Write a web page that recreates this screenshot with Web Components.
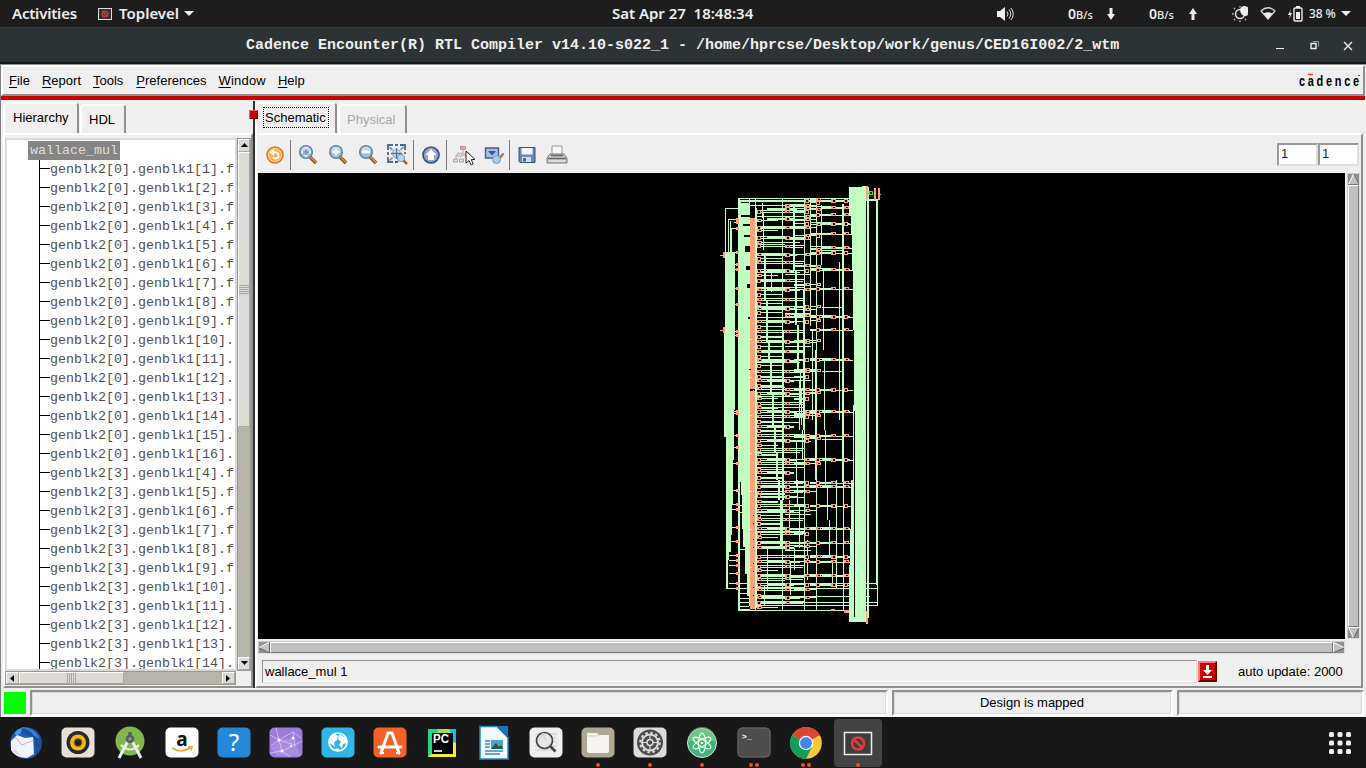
<!DOCTYPE html>
<html lang="en"><head><meta charset="utf-8"><title>Toplevel</title>
<style>
html,body{margin:0;width:1366px;height:768px;overflow:hidden;background:#181818}
body{font:13px "Liberation Sans",Arial,sans-serif;color:#000}
</style></head><body>
<desktop-shell></desktop-shell>
<script>
const define = (name, css, html, after) => customElements.define(name, class extends HTMLElement {
  connectedCallback() {
    if (this.shadowRoot) return;
    const root = this.attachShadow({mode:'open'});
    const t = document.createElement('template');
    t.innerHTML = '<style>*{box-sizing:border-box}:host{display:block;box-sizing:border-box}' + css + '</style>' + (typeof html === 'function' ? html(this) : html);
    root.append(t.content.cloneNode(true));
    if (after) after(this, root);
  }
});
const BLOCK = `<rect x=".5" y=".5" width="13" height="11" fill="#333" stroke="#ddd"/><circle cx="7" cy="6" r="3" fill="#733" stroke="#e33"/><path d="M5 4l4 4" stroke="#e33"/>`;

define('desktop-topbar', `
:host{height:27px;background:#1d1d1d;color:#eee;display:grid;grid-template-columns:1fr auto 1fr;align-items:center;font:600 15px/27px "Noto Sans","Open Sans",sans-serif}
div{display:flex;align-items:center;height:27px;white-space:nowrap}svg{display:block;flex:none}
.l{padding-left:12px}.l svg:first-of-type{margin:0 7px 0 21px}.l svg:last-of-type{margin-left:4px}
.r{justify-content:flex-end;padding-right:15px;font-size:14px}small{font-size:11px;font-weight:500}`,
`<div class="l"><span style="width:65px;letter-spacing:-.2px">Activities</span><svg width="14" height="12">${BLOCK}</svg><span style="width:61px">Toplevel</span><svg width="10" height="5"><path d="M0 0h10L5 5z" fill="#eee"/></svg></div>
<div style="width:142px;letter-spacing:-.02px;white-space:pre">Sat Apr 27  18:48:34</div>
<div class="r"><svg width="17" height="16" style="margin-right:2px"><path d="M0 5h3l5-4v14l-5-4H0z" fill="#eee"/><path d="M10 5.500q2.200 2.500 0 5M12 3.500q3.500 4.500 0 9M14 2q4.500 6 0 12" fill="none" stroke="#ddd"/></svg>
<span style="margin-left:52px;width:26px">0<small>B/s</small></span><svg style="margin-left:13px" width="8" height="12"><path d="M2.500 0h3v6H8l-4 6-4-6h2.500z" fill="#eee"/></svg>
<span style="margin-left:34px;width:26px">0<small>B/s</small></span><svg style="margin-left:14px" width="8" height="12"><path d="M2.500 12h3V6H8L4 0 0 6h2.500z" fill="#eee"/></svg>
<svg style="margin-left:35px" width="16" height="16"><circle cx="8" cy="8" r="4.500" fill="none" stroke="#ddd" stroke-width="1.500"/><path d="M8 3a5 5 0 1 1 5 7Q8 9 8 3z" fill="#eee"/><path d="M8 0v1.500M8 14.500V16M0 8h1.500M14.500 8H16M2 2l1 1M13 13l1 1M14 2l-1 1M3 13l-1 1" stroke="#ccc" stroke-width="1.300"/></svg>
<svg style="margin-left:12px" width="16" height="13"><path d="M1 4q7-6.500 14 0L8 12z" fill="none" stroke="#ddd" stroke-width="1.200"/><path d="M3.500 6.500q4.500-2.500 9 0L8 12z" fill="#eee"/></svg>
<svg style="margin-left:12px" width="15" height="16"><path d="M3 3L0 9h2l-1 4 3-6H2z" fill="#eee"/><rect x="6" y="2" width="8" height="13" rx="1" fill="none" stroke="#eee" stroke-width="1.400"/><path d="M8 0h4v2H8zM8 6h4v7H8z" fill="#eee"/></svg>
<span style="width:27px;margin-left:6px;font-size:12px;font-weight:500;letter-spacing:-.1px">38 %</span><svg style="margin-left:5px" width="10" height="5"><path d="M0 0h10L5 5z" fill="#eee"/></svg></div>`);

define('window-titlebar', `
:host{height:37px;background:linear-gradient(#3a3d3f 0 1px,#2d3335 1px 35px,#151819 35px 36px,#151819);display:grid;grid-template-columns:246px 873px 1fr;align-items:center;color:#eee}
b{grid-column:2;font:bold 15px/34px "Liberation Mono",monospace;white-space:nowrap}
svg{display:block;margin-left:157px}`,
`<b>Cadence Encounter(R) RTL Compiler v14.10-s022_1 - /home/hprcse/Desktop/work/genus/CED16I002/2_wtm</b>
<svg width="80" height="12" fill="none" stroke="#eee"><path d="M0 8.500h8"/><path d="M35 3.500h5v5h-5z" stroke-width="1.400"/><path d="M37 1.500h5.500v5" stroke="#999"/><path d="M68 2l8 8M76 2l-8 8" stroke-width="1.400"/></svg>`);

define('menu-bar', `
:host{height:31px;margin:0 1px 0 0;border:2px solid #fff;border-right-color:#909090;border-bottom-color:#909090;background:#efefef;display:flex;align-items:center;padding:0 3px 0 6px}
span{margin-right:12px;white-space:nowrap;line-height:18px}u{text-decoration-thickness:1px;text-underline-offset:2px}.c{display:flex;margin:0 0 0 auto;width:61px;height:20px;position:relative;font:bold 15px/19px "Liberation Sans",sans-serif;letter-spacing:3.700px}
.c b{transform:scaleX(.73);transform-origin:0 0}.c svg{position:absolute;left:0;top:0}`,
`<span>File</span><span>Report</span><span style="margin-right:13px">Tools</span><span>Preferences</span><span style="letter-spacing:.2px">Window</span><span>Help</span>
<div class="c"><b>cadence</b><svg width="61" height="20"><path d="M9 3.500h5" stroke="#e33" stroke-width="1.600"/><path d="M59 4.500h2" stroke="#555"/></svg></div>`,
(h, r) => r.querySelectorAll('span').forEach(s => { const t = s.textContent; s.innerHTML = `<u>${t[0]}</u>${t.slice(1)}`; }));

define('note-tab', `
:host{border:2px solid #fff;border-right-color:#909090;border-bottom:0;border-radius:5px 4px 0 0;height:31px;width:var(--w);margin-top:2px;background:#efefef;padding-left:var(--p,8px);line-height:27px;white-space:nowrap;align-self:flex-start}
:host([back]){margin:4px 0 0 1px;height:29px;padding-left:7px}
:host([off]){color:#a8a8a8}
:host([focused]) span{display:block;outline:1px dotted #000;width:64px;height:19px;line-height:19px;margin-top:4px;padding-left:1px}`, `<span><slot></slot></span>`);

define('note-book', `
:host{display:flex;flex-direction:column;min-width:0}
.tabs{height:33px;display:flex;flex:none}
.page{flex:1;min-height:0;border:2px solid;border-color:#fff #909090 #909090 #fff;background:#efefef}`,
`<div class="tabs"><slot name="tab"></slot></div><div class="page"><slot></slot></div>`);

define('tree-list', `
:host{width:232px;height:533px;border:2px solid #d9d9d9;background:#fff;overflow:hidden;font:13.333px/19px "Liberation Mono",monospace;color:#505050;padding:1px 0 0 21px}
.root{width:92px;height:19px;background:#858585;color:#ddd;padding-left:2px}
.rows{margin-left:11px;border-left:1px solid #000;white-space:nowrap}
.rows div{height:19px;display:flex}.rows div:before{content:"";width:10px;height:1px;background:#000;margin-top:8px;flex:none}`,
`<div class="root">wallace_mul</div><div class="rows"></div>`, (h, r) => {
  const rows = [];
  for (let i = 1; i < 17; i++) rows.push([0, i]);
  for (let i = 4; i < 15; i++) rows.push([3, i]);
  r.querySelector('.rows').innerHTML = rows.map(([a, b]) => `<div>genblk2[${a}].genblk1[${b}].${b < 10 ? 'f' : ''}</div>`).join('');
});

define('warm-scroll', `
:host{background:#b8b4aa;display:flex;border:1px solid #9c988e}
:host([v]){width:14px;flex-direction:column}:host([h]){height:14px}
i{display:grid;place-items:center;background:#dcdad5;flex:none;border:1px solid;border-color:#fff #aaa69c #aaa69c #fff}
:host([v]) i{height:13px}:host([h]) i{width:13px}
:host([v]) i.t{height:275px}:host([h]) i.t{width:105px}
i:last-child{margin:auto 0 0}:host([h]) i:last-child{margin:0 0 0 auto}`,
h => { const v = h.hasAttribute('v');
  const a = v ? ['M0 5h7L3.500 1z','M0 1h7L3.500 5z'] : ['M5 0v7L1 3.500z','M1 0v7l4-3.500z'];
  const s = d => `<svg width="7" height="7"><path d="${d}"/></svg>`;
  return `<i>${s(a[0])}</i><i class="t"><svg width="11" height="11" stroke="#aaa69c">${[1,3,5,7,9].map(n => v ? `<path d="M0 ${n}.5h11"/>` : `<path d="M${n}.5 0v11"/>`).join('')}</svg></i><i>${s(a[1])}</i>`; });

define('tk-scroll', `
:host{background:#aaa;border:1px solid;border-color:#c8c8c8 #ddd #ddd #c8c8c8;display:flex}
:host([v]){flex-direction:column}svg{flex:none;display:block;background:#909090}
i{flex:1;background:#c0c0c0;border:1px solid;border-color:#fff #777 #777 #fff}`,
h => h.hasAttribute('v')
 ? `<svg width="11" height="11"><path d="M5.500 0L0 11h11z" fill="#c0c0c0"/><path d="M5.500 0L.5 10.500" stroke="#fff"/><path d="M6 0l5 10.500H0" fill="none" stroke="#777"/></svg><i></i><svg width="11" height="11"><path d="M0 0h11L5.500 11z" fill="#c0c0c0"/><path d="M11 .5H.5L5.500 11" fill="none" stroke="#fff"/><path d="M11 1L5.500 11" stroke="#666"/></svg>`
 : `<svg width="11" height="11"><path d="M0 5.500L11 0v11z" fill="#c0c0c0"/><path d="M11 0L0 5.500" stroke="#fff"/><path d="M0 6l10.500 5V0" fill="none" stroke="#666"/></svg><i></i><svg width="11" height="11"><path d="M0 0v11l11-5.500z" fill="#c0c0c0"/><path d="M.5 11V.5L11 5.500" fill="none" stroke="#fff"/><path d="M0 11l11-5" stroke="#666"/></svg>`);

define('tool-bar', `
:host{height:38px;display:flex;align-items:center;padding:1px 2px 0 6px}
svg{width:24px;height:24px;flex:none;display:block;margin:1px 6px 0 0;overflow:visible}
i{width:1px;height:30px;background:#777;flex:none;margin:0 5px 0 -3px}
.f{width:41px;height:23px;border:2px solid;border-color:#999 #ddd #ddd #999;background:#fff;line-height:18px;padding-left:2px;margin-left:auto;color:#222}.f+.f{margin-left:0}`,
() => { const mag = inner => `<svg viewBox="0 0 24 24"><path d="M14 14l6 6" stroke="#7a4210" stroke-width="3.400"/><path d="M14 13.500l6 6" stroke="#d98a38" stroke-width="1.800"/><circle cx="10" cy="9" r="6.300" fill="#9fbcd9" stroke="#5d7fa8" stroke-width="1.500"/><ellipse cx="10" cy="7" rx="4.500" ry="3.500" fill="#dce9f4" opacity=".6"/>${inner}</svg>`;
return `<svg viewBox="0 0 24 24"><circle cx="12" cy="12" r="8" fill="#f6ae4c" stroke="#d97a26" stroke-width="1.500"/><circle cx="12" cy="12" r="6.500" fill="none" stroke="#ffd698"/><path d="M9.500 9.500h3.500a3 3 0 1 1-3 4.500" fill="none" stroke="#fff" stroke-width="2"/><path d="M11 6v7L6.500 9.500z" fill="#fff"/></svg><i></i>
${mag('<g fill="#f4f8fc"><path d="M10 3.500l2 2.500H8zM10 14.500l2-2.500H8zM4.500 9L7 7v4zM15.500 9L13 7v4z"/></g><path d="M10 6v6M7 9h6" stroke="#6f93bb" stroke-width="1.500"/>')}
${mag('<path d="M10 5.500v7M6.500 9h7" stroke="#fff" stroke-width="2.400"/>')}
${mag('<path d="M6 9h8" stroke="#fff" stroke-width="2.600"/>')}
<svg viewBox="0 0 24 24"><g transform="translate(-2 -1)"><path d="M4 8V3h5M16 3h5v5M9 20H4v-5M11 3h3M4 10v3M11 20h3M21 10v2" fill="none" stroke="#476b91" stroke-width="1.800"/><path d="M5.500 5l3 3M19.500 5l-3 3M5.500 18.500l3-3" stroke="#6f8fb0" stroke-width="1.500"/><path d="M12.500 6v11M7 11.500h11" stroke="#476b91" stroke-width="1.300"/><circle cx="12.500" cy="11.500" r="4" fill="none" stroke="#7796b5"/><path d="M19 18l4 4" stroke="#a86427" stroke-width="2.500"/><circle cx="17" cy="16" r="3.700" fill="#b7d5ee" stroke="#7298be"/></g></svg><i></i>
<svg viewBox="0 0 24 24"><circle cx="12" cy="12" r="8" fill="#92a8cb" stroke="#344f83" stroke-width="1.700"/><path d="M12 6l5.500 6H15v5H9v-5H6.500z" fill="#fff"/></svg><i></i>
<svg viewBox="0 0 24 24"><g transform="translate(-1 0)"><path d="M12 6v6M5 16v-4h13v4" fill="none" stroke="#aaa"/><path d="M9.500 3.500h5v3h-5z" fill="#e9a8a2" stroke="#d08a84"/><path d="M6.500 10h4v3.500h-4zM14 10h4v3.500h-4z" fill="#eed0b0" stroke="#deb490"/><path d="M2.500 16h4v3h-4zM8.500 16h4v3h-4z" fill="#dbe4ed" stroke="#93a9be"/><path d="M15 8v12l3-2.500 2.200 4.500 2-1-2-4.500H24z" fill="#fff" stroke="#222"/></g></svg>
<svg viewBox="0 0 24 24"><path d="M3.500 5h13v10h-13z" fill="#a9bee2" stroke="#405f9e" stroke-width="1.500"/><path d="M6 8h8l-4 4.500z" fill="#35588d"/><path d="M17 16l4.500-5.500" stroke="#b57739" stroke-width="2.500"/><circle cx="14.500" cy="16.500" r="4" fill="#a9cbe8" stroke="#7697b8"/></svg><i></i>
<svg viewBox="0 0 24 24"><path d="M4 4.500h16v15H5l-1-1z" fill="#6689c4" stroke="#39507e"/><path d="M6.500 5h11v6.500h-11z" fill="#f4f6fa"/><path d="M7 14h9v5H7z" fill="#ddd"/><path d="M8 15h3v3.500H8z" fill="#506995"/></svg>
<svg viewBox="0 0 24 24"><path d="M7 12V3h10v9z" fill="#f6f6f6" stroke="#999"/><path d="M5 11h14l3 4v5H2v-5z" fill="#ccc" stroke="#777"/><path d="M3 15.500h18M6 12.500h12" stroke="#666" stroke-width="1.300"/><path d="M4 18h16" stroke="#eee"/></svg>
<div class="f">1</div><div class="f">1</div>`; });

define('schematic-view', `:host{background:#000;width:1087px;height:466px}svg{display:block;shape-rendering:crispEdges}`,
'<svg width="1087" height="466" viewBox="258 173 1087 466"></svg>', (h, root) => {
  const G = '#c0ffc0', S = '#ffa07a'; let out = '';
  const box = (x, y, w, ht, f = G) => { out += `<rect x="${x}" y="${y}" width="${w}" height="${ht}" fill="${f}"/>`; };
  const H = (x1, x2, y, t = 1) => box(x1, y, x2 - x1, t), V = (x, y1, y2, t = 1) => box(x, y1, t, y2 - y1);
  const join = (a, b, c) => [...a.map(v => 180 + Math.floor(v / 3)), ...b.map(v => 330 + Math.floor(v / 3)), ...c.map(v => 480 + Math.floor(v / 3))];
  const A = join([95,120,141,151,172,187,195,222,235,247,271,286,301,328,343,357,369,384,397,424,439],[3,18,34,49,64,78,91,106,124,138,151,166,174,190,205,219,232,244,260,274,289,302,316,331,346,359,374,388,401,417,427,441],[6,19,38,46,64,77,91,106,117,130,145,159,173,187,202,230,245,258,270,285,298,313,328,346,352,368,382]);
  const B = join([77,85,95,115,141,172,198,222,247,271,301,328,357,384,407,424],[3,34,64,91,124,151,178,190,219,244,260,289,316,331,359,388,401,427],[6,19,34,48,77,91,117,145,159,187,194,202,230,245,258,285,294,313,328,352,368]);
  const C = join([62,76,86,95,108,118,130,141,166,173,222,256,271,313,328,380,387,407,424],[30,36,87,118,124,138,178,190,205,244,250,260,316,323,331,388,401],[6,19,34,77,92,145,159,187,198,230,245,285,313,328,352]);
  const D = join([57,67,87,103,133,166,208,217,260,268,314,324,379,409,421,448],[30,87,120,178,187,244,256,316,324,388,401],[6,19,77,145,187,230,245,285,313]);
  const E = join([61,82,103,129,160,203,217,268,324,409,448],[87,178,244,316,388],[6,19,77,145,187,230,245,285,313]);
  const L = join([118,126,144,217,252,268,325,372],[3,16,244,251,317,352,400],[31,73,88,142,184,226,241,256,280,310,325]);
  // rails that close the drawing at its top and bottom
  H(738,849,198); H(738,849,200,2); H(741,793,205); H(767,815,208); H(725,739,208); H(728,737,219); H(731,737,228);
  V(725,208,252); V(728,219,252); V(730,221,252); V(731,228,252);
  H(738,849,610); H(739,878,605); H(740,877,602); H(740,870,596); H(739,877,588); H(757,877,583); H(726,738,588);
  // staircase channel: x, first y and last y of each step
  const steps = [[764,255,300],[766,300,342],[768,342,362],[770,362,394],[772,394,426],[774,426,452],[776,452,480],[778,480,500],[780,500,548]];
  const hasB = y => B.some(b => Math.abs(b - y) < 2);
  A.forEach((y, i) => { H(757, hasB(y) ? 785 : 782 - i % 2 * 4, hasB(y) ? y - 1 : y, i % 5 == 2 ? 2 : 1); if (hasB(y)) H(757, 785, y + 1); });
  for (let y = 216, i = 0; y < 600; y += 11 + i++ % 3 * 4) H(757, 800 + i % 2 * 5, y);
  B.forEach((y, i) => { if (i % 2) { H(767, 785, y, 2); H(790, 794 + i % 3 * 3, y, 2); } else { H(790, 805, y - 1); H(790, 803, y + 1); } });
  C.forEach((y, i) => { H(794, 805, y, i % 2 + 1); if (i % 3) H(810, 817, y); if (i % 4 == 0) H(785, 811, y + 4); });
  D.forEach((y, i) => { H(810, 817, y); if (i % 3 == 0) H(822, 842, y + 1); });
  E.forEach((y, i) => { H(810, 832, y - i % 2); H(810, 853, y + 1); if (i % 2) H(822, 850, y); });
  // vertical channels
  V(782,198,610); V(783,330,500); V(755,198,610); V(756,208,608); V(762,203,218); V(793,205,270,2); V(795,270,325,2); V(797,325,372,2);
  V(800,372,405); V(804,198,610); V(803,290,430); V(810,202,300); V(810,300,326); V(812,330,420); V(816,198,610); V(815,350,480);
  V(821,205,265); V(823,270,350); V(824,360,430); V(825,430,485); V(827,485,520); V(829,520,555); V(832,560,583);
  V(839,262,420); V(842,204,482,2); V(836,480,588); V(843,482,610); V(853,405,480);
  [...steps,[799,380,430],[801,390,425],[802,430,459],[797,480,505],[799,505,548],[794,548,570]].forEach(a => V(...a, a[0] < 782 ? 2 : 1));
  [[763,228,250],[771,270,292],[789,500,535],[767,548,590],[790,562,595],[807,540,580],[764,585,605],[763,212,236],[796,440,486]].forEach(a => V(...a));
  // left bus, cell spine and right bus
  box(738,198,12,412); box(740,199,9,1,'#000'); box(741,202,8,1,'#000'); box(741,215,9,2,'#000');
  [[743,224],[744,235],[745,246],[745,248],[745,250],[746,266],[746,268],[747,284],[747,286],[748,317]].forEach(([x,y]) => box(x,y,750-x,2,'#000'));
  out += `<path fill="${G}" d="M725 252H735V410H734V460H733V505H732V535H731V552H729V560H728V588H726V437H724V333H725z"/>`;
  out += '<path fill="#000" d="M740 482h1v13h1v34h1v18h2v27h2v22h2v10h1v3h-10z"/>';
  [505,512,549,583,588,593,598,602,606].forEach(y => H(739,749,y));
  box(750,218,5,391,S); box(750,389,5,2,'#000'); box(749,369,2,1,'#000');
  for (let y = 222, i = 0; y < 606; y += 5 + i++ % 3 * 3) box(753, y, 1, 1, y > 500 && i % 3 ? '#000' : G);
  for (let y = 339; y < 600; y += 38) box(750, y, 2, 1, G);
  out += `<path fill="${G}" d="M849 187H862V186H866V611H864V611H866V622H849V565H850V530H851V480H854V330H853V270H852V235H851V215H849z"/>`;
  box(854,411,1,206,'#000'); V(867,187,618,2); V(876,200,585,2); V(877,583,606); H(866,878,199,2);
  box(866,186,2,13,S); box(874,188,2,12,S); box(878,188,2,12,S); box(880,194,1,1,S); box(866,611,1,13,S); box(867,618,1,6,S);
  out += '<path d="M868 193h2v1h-2zM869 191h4v4h-4z" fill="#0f0"/><path d="M870 192h2v2h-2z"/>';
  // cells, each with its dark window
  const cell = (x, y, big) => { box(x, y - 1, big == 1 ? 4 : 5, big ? 4 : 3, S); box(x + (big == 1 ? 1 : 2), y, 2, big ? 2 : 1, '#000'); };
  A.forEach((y, i) => cell(757, y, i % 2 == 0 ? 1 : 0)); B.forEach((y, i) => cell(785, y, i % 2 ? 2 : 0));
  C.forEach((y, i) => cell(805, y, i % 3 == 0 ? 1 : 0)); D.forEach((y, i) => cell(816, y, i % 2));
  E.forEach((y, i) => { cell(831, y, i % 3 == 0 ? 2 : 0); cell(844, y, i % 3 == 0 ? 1 : 0); });
  box(831,609,4,2,S); box(844,610,5,3,S);
  L.forEach(y => { H(y > 430 ? 729 : 734, 737, y); box(736, y - 1, 3, 3, S); });
  [[722,255],[722,330]].forEach(([x,y]) => { box(x-2,y,4,1,S); box(723,y-3,2,6,S); });
  root.querySelector('svg').innerHTML = out;
});

define('status-bar', `
:host{height:27px;display:grid;grid-template-columns:22px 858px 281px 187px;column-gap:4px;padding-left:3px;margin-top:2px;background:#f3f3f3}
.g{background:#0f0;margin:2px 0 3px;height:22px}.s{border:2px solid;border-color:#909090 #fff #fff #909090;height:26px;margin-left:1px}.s div{height:22px;border:1px solid #d9d9d9;text-align:center;line-height:20px;background:#efefef;padding-right:1px}.s:nth-child(n+3){margin-left:0}`,
`<div class="g"></div><div class="s"><div></div></div><div class="s"><div>Design is mapped</div></div><div class="s"><div></div></div>`);

const tile = (fill, inner) => `<rect x=".5" y="1.500" width="33" height="30" rx="5" fill="${fill}"/>${inner}`;
const ICONS = {
 mail:`<circle cx="17" cy="17" r="15.800" fill="#1c5fb4"/><path d="M3 11Q8 1 17 1q12 1 15 12 1 12-6 17 3-12-4-19T3 11z" fill="#1d4f9c"/><path d="M14 1q12 1 17 12l-6-3Q21 3 12 2z" fill="#2b86d9"/><path d="M2 15l6-6 8 3 8-1 1 17-7 4Q5 31 2 24z" fill="#f3f4f8"/><path d="M6 11l7 8 12-5" fill="none" stroke="#b4b8c6"/><path d="M3 23q6 1 9 7-6-2-9-7z" fill="#d8dcea"/><path d="M6 7q2-4 7-5l-1 5-5 3z" fill="#3aa0e8"/>`,
 rhythm:tile('#e5dfd5','<circle cx="17" cy="16.500" r="11.500" fill="#28292c"/><circle cx="17" cy="16.500" r="8" fill="#f5b912"/><circle cx="17" cy="16.500" r="4" fill="#222" stroke="#987700"/>'),
 android:`<circle cx="17" cy="15" r="14.500" fill="#82b84b"/><path d="M6 32L16 13M28 32L18 13" fill="none" stroke="#eee" stroke-width="3"/><path d="M8 19q9 9 18 0" fill="none" stroke="#e8f0e0" stroke-width="2"/><path d="M17 6v5" stroke="#55606a" stroke-width="3.500"/><circle cx="17" cy="13" r="3" fill="#83a766" stroke="#55606a" stroke-width="2.600"/>`,
 amazon:tile('#fff','<text x="17" y="20" text-anchor="middle" style="font:bold 19px \'Noto Sans\',sans-serif" fill="#111">a</text><path d="M7 22q9 5.500 18 0M23 21h4l-1 3" fill="none" stroke="#f39a2b" stroke-width="1.600"/>'),
 help:tile('#2387da','<text x="17" y="25" text-anchor="middle" style="font:24px \'Noto Sans\',sans-serif" fill="#fff">?</text>'),
 graph:tile('#9b7cdb','<path d="M2 22l9-8 12-2 9 18H8z" fill="#b49be8" opacity=".6"/><path d="M1 9l9 5 14-8 8 6M10 14l16 5 7-4M10 14l3 11 13-6-2-13M1 27l12-2 8 6M2 20l8-6L7 2" fill="none" stroke="#d5c4fa" stroke-width=".8"/><g fill="#fff"><circle cx="10" cy="14" r="1.500"/><circle cx="24" cy="12" r="1.500"/><circle cx="13" cy="25" r="1.500"/><circle cx="22" cy="20" r="1"/></g>'),
 globe:tile('#30b6e6','<circle cx="17" cy="16" r="9" fill="none" stroke="#fff" stroke-width="1.700"/><path d="M9 12l5-4 3 2-1 4-3 2 1 5-5-4zM18 8l7 4 1 5-4 1-1 4-3-3 2-3-3-3zM14 22l5 1-3 2z" fill="#fff"/>'),
 software:tile('#f46229','<path d="M8 27L15 7h4l7 20M6 21h22" fill="none" stroke="#fff" stroke-width="3" stroke-linejoin="round" stroke-linecap="round"/><path d="M8 27h3M23 27h4" stroke="#fff" stroke-width="2"/>'),
 pycharm:`<path d="M3 3h28v28H3z" fill="#21d789"/><path d="M24 3h7v13l-4-2z" fill="#18bbdf"/><path d="M13 3h11l3 6H11z" fill="#9fe04c"/><path d="M31 17v14H3l6-6 18-9z" fill="#f5ee38"/><path d="M3 31l7-7H3z" fill="#35d680"/><rect x="7" y="7" width="21" height="21" fill="#000"/><text x="8" y="17" textLength="16" lengthAdjust="spacingAndGlyphs" style="font:bold 12px 'Liberation Sans',sans-serif" fill="#fff">PC</text><path d="M9 25h8" stroke="#fff" stroke-width="1.600"/>`,
 writer:`<path d="M3 .5h17l11 11V33H3z" fill="#f5f9fc" stroke="#2386ca" stroke-width="1.500"/><path d="M20 0h11v12z" fill="#1774b8"/><path d="M8 15h5M8 18h5M8 21h5M8 25h18M8 28h15" stroke="#3a8ac5" stroke-width="1.300"/><path d="M14 14h12v9H14z" fill="#4ba3d0"/><path d="M14 23l5-6 3 4 2-2 2 4z" fill="#2b5244"/>`,
 viewer:tile('#efefed','<path d="M6 8h22M6 12h22M6 16h22M6 20h22M6 24h22" stroke="#ccc"/><circle cx="15.500" cy="14.500" r="8" fill="#e7e7e5" stroke="#444" stroke-width="1.700"/><path d="M21.500 20.500l5 5" stroke="#444" stroke-width="2.600"/><path d="M10 15l4-8 3 8" fill="none" stroke="#ccc"/>'),
 files:tile('#aea794','<path d="M6 7h10l2 2h10v16q0 2-2 2H8q-2 0-2-2z" fill="#f6f4f0"/><path d="M6 10h10l2-1" fill="none" stroke="#d5d0c5" stroke-width="1.200"/>'),
 settings:tile('#dcdcdb','<circle cx="17" cy="16.500" r="13" fill="#4c4c4c"/><circle cx="17" cy="16.500" r="8" fill="none" stroke="#ddd" stroke-width="2"/><circle cx="17" cy="16.500" r="9.800" fill="none" stroke="#ddd" stroke-width="2" stroke-dasharray="2.600 2.530"/><circle cx="17" cy="16.500" r="3" fill="none" stroke="#ddd" stroke-width="1.500"/><path d="M17 8v5.500M17 19.500v5M9 16.500h5M20 16.500h5" stroke="#ddd" stroke-width="1.200"/>'),
 atom:`<circle cx="17" cy="17" r="14.500" fill="#3eb57e" stroke="#dce9df"/><path d="M3 15a14 14 0 0 1 28 0z" fill="#8dcf8e" opacity=".6"/><g fill="none" stroke="#eaffea" stroke-width="1.200"><ellipse cx="17" cy="17" rx="3.500" ry="10"/><ellipse cx="17" cy="17" rx="3.500" ry="10" transform="rotate(60 17 17)"/><ellipse cx="17" cy="17" rx="3.500" ry="10" transform="rotate(-60 17 17)"/></g><circle cx="17" cy="17" r="1.300" fill="#fff"/>`,
 terminal:tile('#4d4d4d','<text x="5" y="13" textLength="10" style="font:bold 8px \'Liberation Mono\',monospace" fill="#fff">&gt;_</text><rect x="1" y="2" width="32" height="29" rx="4" fill="none" stroke="#666"/>'),
 chrome:`<circle cx="17" cy="17" r="15.800" fill="#fbc934"/><path d="M17 17L3.300 9A15.800 15.800 0 0 1 30.700 9z" fill="#db4437"/><path d="M17 9h13.500" stroke="#db4437" stroke-width="2"/><path d="M3.300 9A15.800 15.800 0 0 0 17 33l6-12-6-4z" fill="#199b58"/><circle cx="17" cy="17" r="7.200" fill="#fff"/><circle cx="17" cy="17" r="6" fill="#4285f4"/>`,
 blocked:`<rect x="3.500" y="6.500" width="27" height="22" fill="#3d3d3d" stroke="#eee" stroke-width="1.500"/><circle cx="17" cy="17.500" r="6" fill="none" stroke="#df3d3c" stroke-width="2.500"/><path d="M13 13.500l8 8" stroke="#df3d3c" stroke-width="2.500"/>`
};
define('dock-item', `
:host{width:48px;height:48px;display:flex;flex-direction:column;align-items:center;border-radius:4px;padding-top:7px;margin:2px 4px 0 0}
:host([active]){background:#434343}svg{display:block;flex:none;overflow:visible}p{margin:3px 0 0;display:flex;gap:2px}i{width:4px;height:4px;border-radius:50%;background:#e95420}`,
h => `<svg width="34" height="34" viewBox="0 0 34 34">${ICONS[h.getAttribute('icon')]}</svg><p>${'<i></i>'.repeat(+h.getAttribute('dots') || 0)}</p>`);
define('app-dock', `:host{height:51px;background:#181818;display:flex;padding:0 15px 0 2px}.a{margin:15px 0 0 auto}`,
() => Object.keys(ICONS).map(n => `<dock-item icon="${n}" dots="${({files:1,settings:1,atom:1,terminal:2,chrome:2,blocked:1})[n] || 0}"${n == 'blocked' ? ' active' : ''}></dock-item>`).join('') +
 `<svg class="a" width="22" height="23" fill="#eee">${[0,8.5,17].map(y => [0,8.5,17].map(x => `<rect x="${x}" y="${y}" width="5" height="5" rx="1.500"/>`).join('')).join('')}</svg>`);

define('app-window', `
:host{height:653px;background:#efefef;border-left:1px solid #808080;border-top:1px solid #909090}
.red{height:4px;background:#c80000;margin-right:1px}
.body{display:grid;grid-template-columns:250px 2px 1108px;height:588px;padding-left:2px}
.sash{background:#2d3335;position:relative;margin-top:1px}.sash i{position:absolute;left:-4px;top:9px;width:9px;height:9px;background:#c80000;border:1px solid;border-color:#f66 #700 #700 #f66}
.tree{display:grid;grid-template-columns:232px 14px;grid-template-rows:533px 14px;padding-top:3px}
.tree warm-scroll[h]{margin-right:1px}
.view{display:grid;grid-template-columns:1087px 13px;column-gap:2px;row-gap:2px;grid-template-rows:466px 13px;padding-left:1px}
.cmd{display:flex;align-items:center;padding:6px 0 0 5px}.entry{width:935px;height:23px;border:1px solid;border-color:#909090 #d9d9d9 #d9d9d9 #909090;line-height:21px;padding-left:2px;box-shadow:inset -1px -1px #fff}
.dl{width:19px;height:21px;background:#c80000;border:2px solid;border-color:#ff7878 #700000 #700000 #ff7878;margin:0 21px 0 1px}.dl svg{display:block}`,
`<menu-bar></menu-bar><div class="red"></div><div class="body">
<note-book><note-tab slot="tab" style="--w:76px">Hierarchy</note-tab><note-tab slot="tab" back style="--w:46px">HDL</note-tab><div class="tree"><tree-list></tree-list><warm-scroll v></warm-scroll><warm-scroll h></warm-scroll></div></note-book>
<div class="sash"><i></i></div>
<note-book><note-tab slot="tab" focused style="--w:82px;--p:7px">Schematic</note-tab><note-tab slot="tab" back off style="--w:69px">Physical</note-tab>
<tool-bar></tool-bar><div class="view"><schematic-view></schematic-view><tk-scroll v></tk-scroll><tk-scroll h></tk-scroll></div>
<div class="cmd"><div class="entry">wallace_mul 1</div><div class="dl"><svg width="15" height="17"><path d="M6 2h3v5h3l-4.500 5L3 7h3zM3 13h9v2H3z" fill="#fff"/></svg></div><span>auto update: 2000</span></div></note-book>
</div><status-bar></status-bar>`);
define('desktop-shell', `:host{width:1366px;height:768px;display:grid;grid-template-rows:27px 37px 653px 51px}`, '<desktop-topbar></desktop-topbar><window-titlebar></window-titlebar><app-window></app-window><app-dock></app-dock>');
</script></body></html>
